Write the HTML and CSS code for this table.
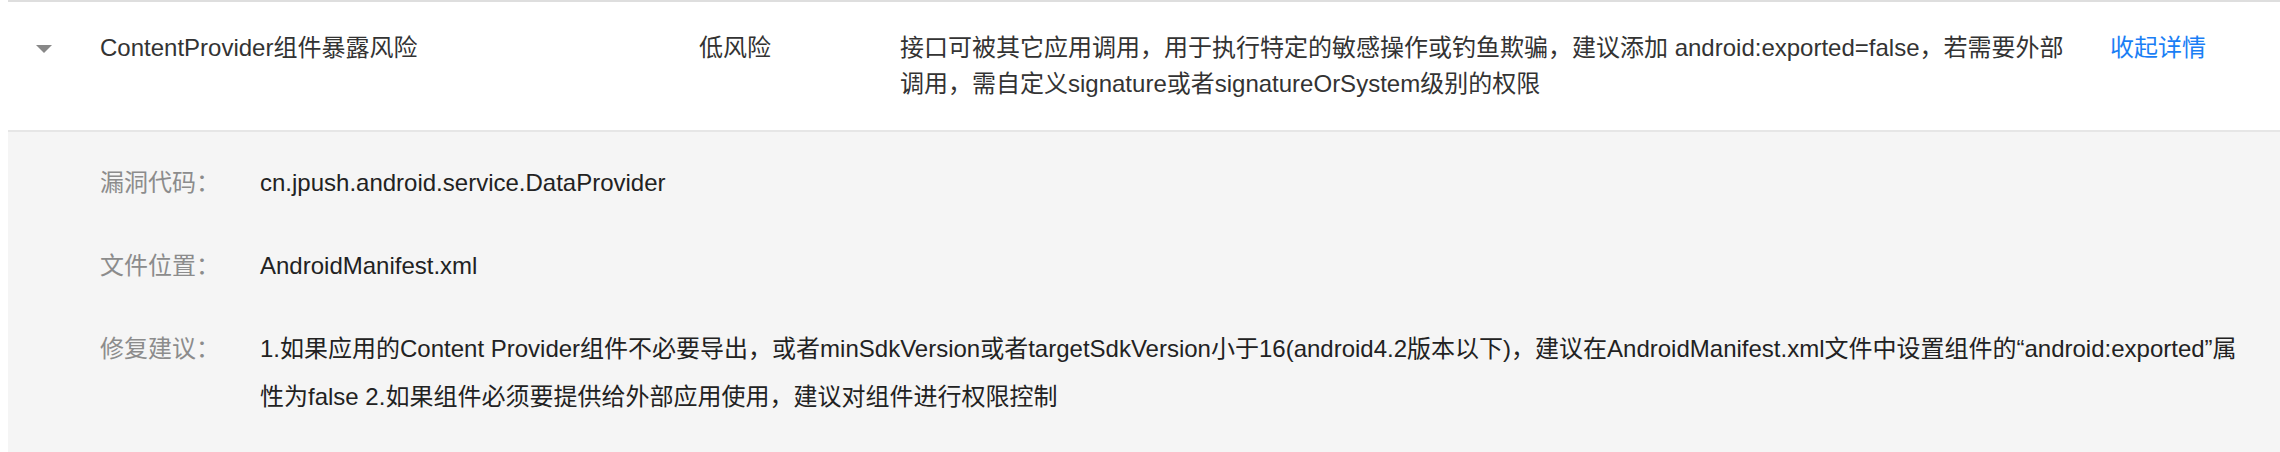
FILE: index.html
```html
<!DOCTYPE html>
<html lang="zh-CN">
<head>
<meta charset="utf-8">
<title>漏洞详情</title>
<link rel="stylesheet" href="styles.css">
</head>
<body>
<div class="vuln">
  <div class="vuln-row">
    <div class="cell-toggle">
      <svg class="caret" width="16" height="8" viewBox="0 0 16 8" aria-hidden="true"><polygon points="0,0 16,0 8,8" fill="#888888"/></svg>
    </div>
    <div class="cell-name">ContentProvider组件暴露风险</div>
    <div class="cell-level">低风险</div>
    <div class="cell-desc">接口可被其它应用调用，用于执行特定的敏感操作或钓鱼欺骗，建议添加 android:exported=false，若需要外部调用，需自定义signature或者signatureOrSystem级别的权限</div>
    <div class="cell-action"><a class="toggle-link" href="#">收起详情</a></div>
  </div>
  <div class="vuln-detail">
    <div class="detail-row">
      <div class="detail-label">漏洞代码：</div>
      <div class="detail-value">cn.jpush.android.service.DataProvider</div>
    </div>
    <div class="detail-row">
      <div class="detail-label">文件位置：</div>
      <div class="detail-value">AndroidManifest.xml</div>
    </div>
    <div class="detail-row">
      <div class="detail-label">修复建议：</div>
      <div class="detail-value">1.如果应用的Content Provider组件不必要导出，或者minSdkVersion或者targetSdkVersion小于16(android4.2版本以下)，建议在AndroidManifest.xml文件中设置组件的“android:exported”属性为false 2.如果组件必须要提供给外部应用使用，建议对组件进行权限控制</div>
    </div>
  </div>
</div>
</body>
</html>
```
FILE: styles.css
```css
html, body {
  margin: 0;
  padding: 0;
  background: #ffffff;
}

body {
  padding-left: 8px;
  font-family: "Liberation Sans", "Noto Sans CJK SC", sans-serif;
  font-size: 24px;
  color: #333333;
}

.vuln {
  display: flex;
  flex-direction: column;
}

.vuln-row {
  display: grid;
  grid-template-columns: 92px 599px 201px 1210px 1fr;
  padding: 28px 0;
  border-top: 2px solid #dedede;
  line-height: 36px;
}

.cell-toggle {
  display: flex;
  align-items: center;
  height: 36px;
  padding-left: 28px;
}

.caret {
  display: block;
  margin-top: 2px;
}

.cell-name,
.cell-level {
  color: #333333;
}

.cell-desc {
  padding-right: 35px;
  color: #333333;
}

.toggle-link {
  color: #1a7ef5;
  text-decoration: none;
}

.vuln-detail {
  display: flex;
  flex-direction: column;
  gap: 35px;
  padding: 27px 25px 40px 92px;
  border-top: 2px solid #e6e6e6;
  background: #f5f5f5;
}

.detail-row {
  display: grid;
  grid-template-columns: 160px 1fr;
  line-height: 48px;
}

.detail-label {
  color: #8c8c8c;
}

.detail-value {
  color: #222222;
}
```
